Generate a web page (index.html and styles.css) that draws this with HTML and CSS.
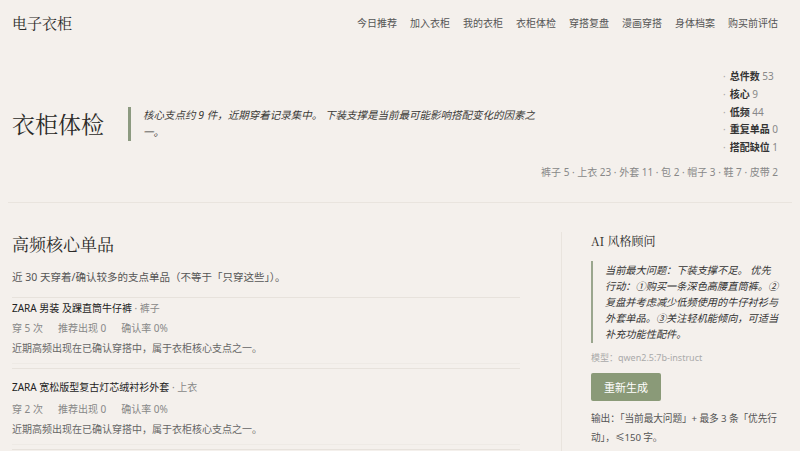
FILE: index.html
```html
<!DOCTYPE html>
<html lang="zh-CN">
<head>
  <meta charset="UTF-8">
  <meta name="viewport" content="width=device-width, initial-scale=1">
  <title>电子衣柜 · 衣柜体检</title>
  <link rel="stylesheet" href="styles.css">
</head>
<body>
  <header class="topbar">
    <div class="brand">电子衣柜</div>
    <nav class="nav">
      <a href="#">今日推荐</a>
      <a href="#">加入衣柜</a>
      <a href="#">我的衣柜</a>
      <a href="#">衣柜体检</a>
      <a href="#">穿搭复盘</a>
      <a href="#">漫画穿搭</a>
      <a href="#">身体档案</a>
      <a href="#">购买前评估</a>
    </nav>
  </header>

  <section class="hero">
    <h1 class="hero-title">衣柜体检</h1>
    <p class="hero-note">核心支点约 9 件，近期穿着记录集中。 下装支撑是当前最可能影响搭配变化的因素之一。</p>
    <div class="hero-stats">
      <ul class="stat-list">
        <li><b>总件数</b> 53</li>
        <li><b>核心</b> 9</li>
        <li><b>低频</b> 44</li>
        <li><b>重复单品</b> 0</li>
        <li><b>搭配缺位</b> 1</li>
      </ul>
      <div class="cat-line">裤子 5 · 上衣 23 · 外套 11 · 包 2 · 帽子 3 · 鞋 7 · 皮带 2</div>
    </div>
  </section>

  <main class="content">
    <section class="core">
      <h2 class="section-title">高频核心单品</h2>
      <p class="section-sub">近 30 天穿着/确认较多的支点单品（不等于「只穿这些」）。</p>

      <div class="item">
        <div class="item-inner">
          <div class="item-name">ZARA 男装 及踝直筒牛仔裤 <span class="muted">· 裤子</span></div>
          <div class="item-meta"><span>穿 5 次</span><span>推荐出现 0</span><span>确认率 0%</span></div>
          <div class="item-desc">近期高频出现在已确认穿搭中，属于衣柜核心支点之一。</div>
        </div>
      </div>

      <div class="item">
        <div class="item-inner">
          <div class="item-name">ZARA 宽松版型复古灯芯绒衬衫外套 <span class="muted">· 上衣</span></div>
          <div class="item-meta"><span>穿 2 次</span><span>推荐出现 0</span><span>确认率 0%</span></div>
          <div class="item-desc">近期高频出现在已确认穿搭中，属于衣柜核心支点之一。</div>
        </div>
      </div>
    </section>

    <aside class="advisor">
      <h3 class="advisor-title">AI 风格顾问</h3>
      <blockquote class="advice">当前最大问题：下装支撑不足。 优先行动：①购买一条深色高腰直筒裤。②复盘并考虑减少低频使用的牛仔衬衫与外套单品。③关注轻机能倾向，可适当补充功能性配件。</blockquote>
      <div class="model">模型：qwen2.5:7b-instruct</div>
      <button class="btn">重新生成</button>
      <p class="advisor-hint">输出：「当前最大问题」+ 最多 3 条「优先行动」，≤150 字。</p>
    </aside>
  </main>
</body>
</html>
```

FILE: styles.css
```css
* {
  margin: 0;
  padding: 0;
  box-sizing: border-box;
}

body {
  background-color: #f4f0ec;
  color: #2b2a28;
  font-family: "Noto Sans", "Noto Sans CJK SC", sans-serif;
  font-size: 11px;
  padding: 0 22px 0 12px;
}

.topbar {
  height: 45px;
  display: flex;
  justify-content: space-between;
  align-items: center;
}

.brand {
  font-family: "Noto Serif CJK SC", "Liberation Serif", serif;
  font-size: 15px;
  color: #2b2a28;
}

.nav {
  display: flex;
  gap: 13px;
}

.nav a {
  color: #555;
  text-decoration: none;
  font-size: 10px;
}

.hero {
  display: flex;
  align-items: center;
  min-height: 158px;
  border-bottom: 1px solid #e9e4de;
  margin: 0 -14px 0 -4px;
  padding: 0 14px 0 4px;
}

.hero-title {
  font-family: "Noto Serif CJK SC", "Liberation Serif", serif;
  font-weight: 400;
  font-size: 23px;
  width: 116px;
}

.hero-note {
  width: 412px;
  border-left: 3px solid #8c9a80;
  padding: 0 0 0 12px;
  font-style: italic;
  font-size: 10.5px;
  line-height: 17px;
  color: #3a3936;
}

.hero-stats {
  margin-left: auto;
  display: flex;
  flex-direction: column;
  align-items: flex-end;
}

.stat-list {
  list-style: none;
  color: #888;
  font-size: 10px;
}

.stat-list li {
  line-height: 17.7px;
}

.stat-list li::before {
  content: "·";
  color: #aaa;
  margin: 0 4px 0 -7px;
}

.stat-list b {
  color: #333;
  font-weight: 700;
}

.cat-line {
  margin-top: 7px;
  color: #888;
  font-size: 10px;
  white-space: nowrap;
}

.content {
  display: grid;
  grid-template-columns: 508px 1fr;
  column-gap: 41px;
  padding-top: 29px;
}

.section-title {
  font-family: "Noto Serif CJK SC", "Liberation Serif", serif;
  font-weight: 400;
  font-size: 17px;
  line-height: 28px;
  margin-top: -2px;
}

.section-sub {
  margin-top: 11px;
  color: #555;
  font-size: 10.5px;
  padding-bottom: 13px;
  border-bottom: 1px solid #e7e2dc;
}

.item {
  padding-bottom: 4px;
  border-bottom: 1px solid #e7e2dc;
}

.item-inner {
  padding-bottom: 5px;
  border-bottom: 1px solid #eeeae5;
}

.item + .item .item-inner {
  padding-top: 8px;
}

.item-name,
.item-meta,
.item-desc {
  line-height: 20px;
  font-size: 10px;
}

.item-name {
  color: #222;
}

.muted {
  color: #888;
}

.item-meta {
  color: #888;
  display: flex;
  gap: 15px;
}

.item + .item .item-meta {
  margin-top: 2px;
}

.item-desc {
  color: #666;
}

.advisor {
  border-left: 1px solid #e9e4de;
  padding-left: 29px;
  min-height: 230px;
}

.advisor-title {
  font-family: "Noto Serif CJK SC", "Liberation Serif", serif;
  font-weight: 400;
  font-size: 12px;
  line-height: 18px;
}

.advice {
  margin: 11px -2px 0 0;
  border-left: 2px solid #9aa68e;
  padding: 1px 0 1px 12px;
  font-style: italic;
  font-size: 10.2px;
  line-height: 16px;
  color: #333;
}

.model {
  margin-top: 8px;
  color: #aaa;
  font-size: 9px;
}

.btn {
  margin-top: 9px;
  width: 70px;
  height: 28px;
  border: none;
  border-radius: 2px;
  background-color: #8a9a78;
  color: #fff;
  font-family: inherit;
  font-size: 11px;
  cursor: pointer;
}

.advisor-hint {
  margin-top: 8px;
  color: #555;
  font-size: 9.7px;
  letter-spacing: -0.1px;
  line-height: 19px;
}
```
